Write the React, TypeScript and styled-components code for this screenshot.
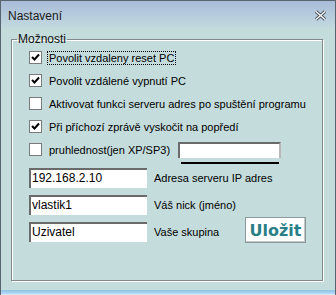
import React from "react";
import styled, { createGlobalStyle } from "styled-components";

const Global = createGlobalStyle`
  html, body { margin: 0; padding: 0; background: #c4dcdc; }
  body { font-family: "Liberation Sans", sans-serif; font-size: 11px; color: #000; }
`;

const Window = styled.div`
  width: 336px;
  height: 295px;
  box-sizing: border-box;
  border-left: 1px solid #5a6470;
  border-right: 1px solid #5a6470;
  border-top: 1px solid #5a6470;
  display: flex;
  flex-direction: column;
  background: #c4dcdc;
`;

const TitleBar = styled.div`
  height: 29px;
  display: flex;
  align-items: center;
  justify-content: space-between;
  padding: 0 8px 0 7px;
  background: linear-gradient(#a8bcd8, #bcd2de 70%, #c4dcdc);
  font-family: "Liberation Sans", sans-serif;
  font-size: 12px;
  color: #1a1a1a;
`;

const Body = styled.div`
  flex: 1;
  padding: 2px 12px 0 10px;
  display: flex;
  flex-direction: column;
`;

const BottomEdge = styled.div`
  height: 6px;
  background: linear-gradient(#c4dcdc 0, #c4dcdc 1px, #8ec4e8 1px, #a8d4f0 4px, #e0eef8 6px);
`;

const Group = styled.fieldset`
  margin: 0;
  height: 249px;
  box-sizing: border-box;
  border: 1px solid #808a8a;
  box-shadow: inset 1px 1px 0 #ffffff, 1px 1px 0 #ffffff;
  padding: 0 0 0 17px;
  display: flex;
  flex-direction: column;
`;

const Legend = styled.legend`
  font-size: 12px;
  padding: 0 1px;
  margin-left: -12px;
  color: #111;
`;

const Row = styled.label`
  display: flex;
  align-items: center;
  height: 23px;
  gap: 4px;
`;

const Box = styled.span`
  width: 11px;
  height: 11px;
  border: 1px solid #7a7a7a;
  background: #fff;
  display: inline-flex;
  align-items: center;
  justify-content: center;
  flex: none;
  margin-right: 2px;
`;

const Text = styled.span<{ $focus?: boolean; $w?: number }>`
  padding: 0 1px;
  outline: ${(p) => (p.$focus ? "1px dotted #000" : "none")};
  white-space: nowrap;
  ${(p) => (p.$w ? `width: ${p.$w}px;` : "")}
`;

const Slider = styled.div`
  width: 103px;
  height: 16px;
  box-sizing: border-box;
  background: #fff;
  border-top: 2px solid #6a6a6a;
  border-left: 2px solid #6a6a6a;
  border-right: 2px solid #b8b8b8;
  position: relative;
  &::after {
    content: "";
    position: absolute;
    left: 1px;
    right: 0;
    bottom: -6px;
    height: 2px;
    background: #000;
  }
`;

const Fields = styled.div`
  display: grid;
  grid-template-columns: 118px 1fr;
  grid-auto-rows: 27px;
  column-gap: 7px;
  align-items: center;
  margin-top: 3px;
  padding-right: 16px;
`;

const Input = styled.div`
  height: 20px;
  box-sizing: border-box;
  background: #fff;
  border-top: 2px solid #6a6a6a;
  border-left: 2px solid #6a6a6a;
  font-size: 12px;
  line-height: 17px;
  padding-left: 1px;
`;

const FieldLabel = styled.span`
  grid-column: 2;
  font-size: 11px;
  white-space: nowrap;
`;

const Button = styled.button`
  grid-column: 2;
  grid-row: 3;
  justify-self: end;
  align-self: end;
  margin-bottom: 2px;
  width: 61px;
  height: 26px;
  background: #fff;
  border: 1px solid #8a9a9a;
  box-shadow: inset -1px -1px 0 #c0c8c8;
  font-family: "DejaVu Sans", sans-serif;
  font-weight: bold;
  font-size: 16px;
  color: #2a7f86;
  padding: 0;
`;

const Check = () => (
  <svg width="9" height="9" viewBox="0 0 9 9">
    <path d="M1 4 L3.5 6.5 L8 1.5" stroke="#000" strokeWidth="2" fill="none" />
  </svg>
);

const Close = () => (
  <svg width="13" height="11" viewBox="0 0 13 11">
    <path d="M2 1.5 L11 9.5 M11 1.5 L2 9.5" stroke="#4a5560" strokeWidth="3.2" />
    <path d="M2 1.5 L11 9.5 M11 1.5 L2 9.5" stroke="#fff" strokeWidth="1.2" />
  </svg>
);

const options = [
  { t: "Povolit vzdaleny reset PC", c: true, f: true },
  { t: "Povolit vzdálené vypnutí PC", c: true },
  { t: "Aktivovat funkci serveru adres po spuštění programu", c: false },
  { t: "Při příchozí zprávě vyskočit na popředí", c: true },
];

const fields = [
  { v: "192.168.2.10", l: "Adresa serveru IP adres" },
  { v: "vlastik1", l: "Váš nick (jméno)" },
  { v: "Uzivatel", l: "Vaše skupina" },
];

export default function App() {
  return (
    <>
      <Global />
      <Window>
        <TitleBar>
          <span>Nastavení</span>
          <Close />
        </TitleBar>
        <Body>
          <Group>
            <Legend>Možnosti</Legend>
            {options.map((o) => (
              <Row key={o.t}>
                <Box>{o.c && <Check />}</Box>
                <Text $focus={o.f}>{o.t}</Text>
              </Row>
            ))}
            <Row>
              <Box />
              <Text $w={124}>pruhlednost(jen XP/SP3)</Text>
              <Slider />
            </Row>
            <Fields>
              {fields.map((f, i) => (
                <React.Fragment key={f.l}>
                  <Input style={{ gridRow: i + 1 }}>{f.v}</Input>
                  <FieldLabel style={{ gridRow: i + 1 }}>{f.l}</FieldLabel>
                </React.Fragment>
              ))}
              <Button>Uložit</Button>
            </Fields>
          </Group>
        </Body>
        <BottomEdge />
      </Window>
    </>
  );
}
